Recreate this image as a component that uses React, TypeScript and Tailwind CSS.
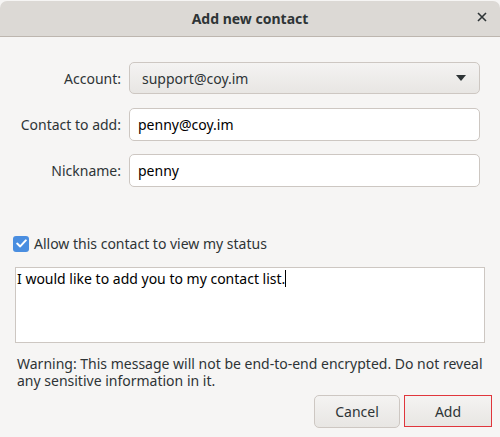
import React from "react";

const font = { fontFamily: '"Noto Sans", "Open Sans", sans-serif' };

function Row({ label, children }: { label: string; children: React.ReactNode }) {
  return (
    <div className="flex items-center h-[33px]">
      <div className="w-[122px] pr-[1px] text-right text-[14px] text-[#2e3436]">{label}</div>
      <div className="ml-[7px] w-[351px] h-full">{children}</div>
    </div>
  );
}

export default function App() {
  return (
    <div className="w-[500px] h-[437px] bg-[#f6f5f4] text-[#2e3436]" style={font}>
      <div className="pt-px bg-[#f6f5f4]">
        <div className="relative flex items-center justify-center h-[36px] rounded-t-[7px] bg-[#dcd9d5] border-b border-[#bdb6af]">
          <span className="text-[14px] font-bold text-[#2e3436]">Add new contact</span>
          <span className="absolute right-[13px] top-[11px] w-[10px] h-[10px]">
            <svg viewBox="0 0 10 10" width="10" height="10">
              <path d="M1 1L9 9M9 1L1 9" stroke="#2e3436" strokeWidth="1.6" />
            </svg>
          </span>
        </div>
      </div>

      <div className="flex flex-col gap-[13px] pt-[25px]">
        <Row label="Account:">
          <div className="flex items-center justify-between h-[32px] px-[12px] rounded-[5px] border border-[#cdc7c2] bg-gradient-to-b from-[#f4f3f2] to-[#e8e6e3] text-[14px] text-[#2e3436]">
            <span>support@coy.im</span>
            <svg width="10" height="6" viewBox="0 0 10 6" className="mr-[1px]">
              <path d="M0 0H10L5 6Z" fill="#2e3436" />
            </svg>
          </div>
        </Row>
        <Row label="Contact to add:">
          <div className="flex items-center h-full px-[8px] rounded-[5px] border border-[#cdc7c2] bg-white text-[14px] text-black">
            penny@coy.im
          </div>
        </Row>
        <Row label="Nickname:">
          <div className="flex items-center h-full px-[8px] rounded-[5px] border border-[#cdc7c2] bg-white text-[14px] text-black">
            penny
          </div>
        </Row>
      </div>

      <div className="flex items-center mt-[48px] ml-[13px] h-[17px] gap-[5px]">
        <div className="flex items-center justify-center w-[16px] h-[16px] rounded-[3px] bg-[#4a8ee0]">
          <svg width="11" height="9" viewBox="0 0 11 9">
            <path d="M1.2 4.6L4.2 7.4L9.8 1.4" stroke="white" strokeWidth="2" fill="none" strokeLinecap="round" strokeLinejoin="round" />
          </svg>
        </div>
        <span className="text-[14px] text-[#2e3436]">Allow this contact to view my status</span>
      </div>

      <div className="mt-[15px] ml-[15px] w-[470px] h-[76px] border border-[#cdc7c2] bg-white px-[1px] pt-px text-[14px] text-black leading-[20px]">
        I would like to add you to my contact list.<span className="inline-block w-px h-[17px] bg-black align-[-3px]" />
      </div>

      <p className="mt-[12px] ml-[17px] w-[470px] text-[14px] leading-[17px] text-[#2e3436]">
        Warning: This message will not be end-to-end encrypted. Do not reveal any sensitive information in it.
      </p>

      <div className="flex justify-end gap-[4px] mt-[6px] pr-[8px]">
        <button className="w-[86px] h-[33px] rounded-[5px] border border-[#cdc7c2] bg-gradient-to-b from-[#f4f3f2] to-[#e8e6e3] text-[14px] text-[#2e3436]">
          Cancel
        </button>
        <button className="w-[88px] h-[32px] border border-[#e0363c] bg-gradient-to-b from-[#f4f3f2] to-[#e8e6e3] text-[14px] text-[#2e3436]">
          Add
        </button>
      </div>
    </div>
  );
}
